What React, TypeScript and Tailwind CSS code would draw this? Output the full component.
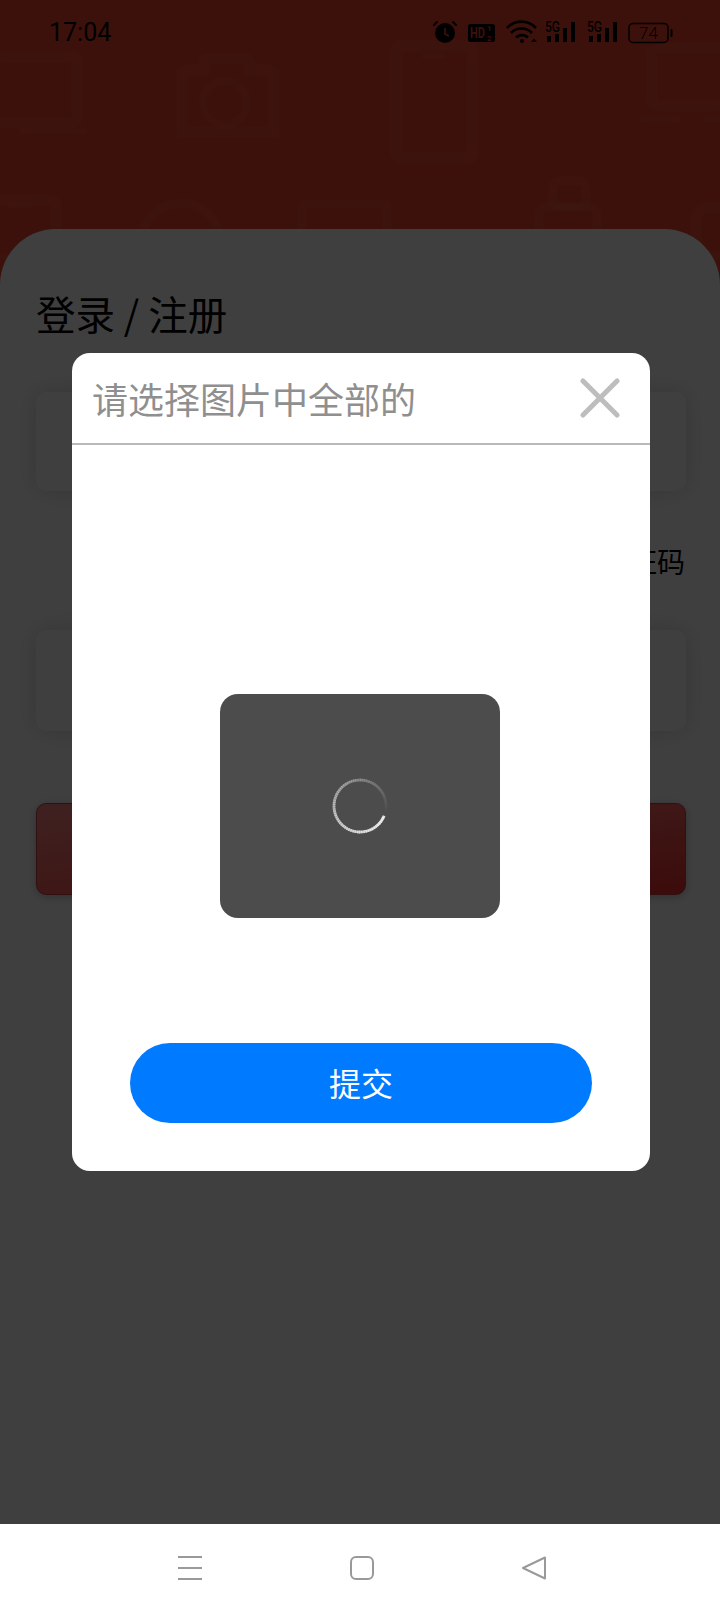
const font = { fontFamily: '"Noto Sans CJK SC", sans-serif' };

// the device doodles behind the red header, very faint
function HeaderPattern() {
  return (
    <svg className="absolute left-0 top-0 blur-[1px]" width="720" height="260" fill="none" stroke="#ffffff" strokeOpacity="0.05" strokeWidth="10">
      <rect x="-60" y="57" width="137" height="66" rx="4" />
      <path d="M20 131h66" strokeWidth="5" />
      <path d="M182 132V74a4 4 0 0 1 4-4h18v-8a3 3 0 0 1 3-3h40a3 3 0 0 1 3 3v8h20a4 4 0 0 1 4 4v58z" />
      <circle cx="225" cy="103" r="22" strokeWidth="7" />
      <rect x="396" y="46" width="77" height="112" rx="6" strokeWidth="11" />
      <path d="M422 56h24" strokeWidth="4" />
      <rect x="652" y="48" width="100" height="58" rx="4" />
      <path d="M640 119h40M704 119h20" strokeWidth="7" />
      <rect x="-30" y="200" width="86" height="60" rx="6" />
      <path d="M8 206h24" strokeWidth="4" />
      <circle cx="181" cy="242" r="39" strokeWidth="8" />
      <rect x="302" y="204" width="85" height="60" rx="4" strokeWidth="8" />
      <rect x="553" y="181" width="33" height="26" rx="6" strokeWidth="8" />
      <rect x="539" y="207" width="58" height="50" rx="8" strokeWidth="8" />
      <rect x="696" y="208" width="60" height="50" rx="12" />
    </svg>
  );
}

function StatusIcons() {
  return (
    <svg className="absolute left-0 top-0" width="720" height="60">
      {/* alarm */}
      <circle cx="445" cy="33" r="10" fill="#000" />
      <path d="M437 22l-3 3M453 22l3 3" stroke="#000" strokeWidth="2" strokeLinecap="round" />
      <path d="M445 28v6l4 2" stroke="#3c110b" strokeWidth="1.6" fill="none" />
      {/* HD */}
      <rect x="468" y="24" width="27" height="18" rx="2.5" fill="#000" />
      <text x="470" y="38" fontSize="14" fontWeight="700" fill="#3c110b" fontFamily="Roboto, sans-serif" textLength="15" lengthAdjust="spacingAndGlyphs">HD</text>
      <text x="487" y="31" fontSize="8" fontWeight="700" fill="#3c110b" fontFamily="Roboto, sans-serif">1</text>
      <text x="487" y="41" fontSize="8" fontWeight="700" fill="#3c110b" fontFamily="Roboto, sans-serif">2</text>
      {/* wifi */}
      <g fill="none" stroke="#000" strokeWidth="2.6">
        <path d="M507 28c8-8.500 21-8.500 29 0" />
        <path d="M511 33c5.500-6 15.500-6 21 0" />
        <path d="M516 37.500c3-3.200 9-3.200 12 0" />
      </g>
      <circle cx="522" cy="41" r="2" fill="#000" />
      <path d="M531 42l3-3.500 3 3.500z" fill="#000" />
      {/* two 5G signal groups */}
      {[0, 42].map((dx) => (
        <g key={dx} fill="#000">
          <text x={545 + dx} y="32" fontSize="14" fontWeight="500" fontFamily="Roboto, sans-serif" textLength="15" lengthAdjust="spacingAndGlyphs">5G</text>
          <rect x={547 + dx} y="36" width="4" height="6" />
          <rect x={555 + dx} y="34" width="4" height="8" />
          <rect x={563 + dx} y="28" width="4" height="14" />
          <rect x={571 + dx} y="22" width="4" height="20" />
        </g>
      ))}
      {/* battery */}
      <rect x="629" y="23.500" width="39" height="19" rx="4" fill="none" stroke="#000" strokeWidth="1.5" />
      <rect x="670.500" y="29" width="2" height="8" rx="1" fill="#000" />
      <text x="648.500" y="39" fontSize="17" textAnchor="middle" fill="#000" fontFamily="Roboto, sans-serif" fontWeight="300">74</text>
    </svg>
  );
}

// conic fade, bright at the leading end and dying off clockwise
function Spinner() {
  const cx = 30;
  const cy = 30;
  const r = 26;
  const count = 72;
  const pts = Array.from({ length: count }, (_, i) => {
    const t = i / count;
    const a0 = ((112 + t * 350 - 90) * Math.PI) / 180;
    const a1 = ((112 + ((i + 1.3) / count) * 350 - 90) * Math.PI) / 180;
    return {
      d: `M${cx + r * Math.cos(a0)} ${cy + r * Math.sin(a0)}A${r} ${r} 0 0 1 ${cx + r * Math.cos(a1)} ${cy + r * Math.sin(a1)}`,
      o: 0.85 * (1 - t),
    };
  });
  return (
    <svg width="60" height="60" fill="none">
      {pts.map((p, i) => (
        <path key={i} d={p.d} stroke="#fff" strokeOpacity={p.o} strokeWidth="2.800" />
      ))}
    </svg>
  );
}

export default function App() {
  return (
    <div className="relative flex h-[1612px] w-[720px] flex-col overflow-hidden bg-white" style={font}>
      {/* login page underneath */}
      <div className="relative flex h-[1524px] flex-col bg-[#f4462e]">
        <HeaderPattern />
        <div className="relative mt-[229px] flex flex-1 flex-col rounded-t-[56px] bg-white px-[36px] pt-[59px]">
          <h1 className="h-[50px] text-[39.500px] font-normal leading-[50px] text-black">登录 / 注册</h1>
          <div className="mt-[54px] h-[99px] w-[650px] rounded-[10px] bg-white shadow-[0_0_24px_rgba(0,0,0,0.16)]" />
          <div className="mt-[39px] flex h-[62px] w-[649px] items-center justify-end text-[28px] text-black">获取验证码</div>
          <div className="mt-[38px] h-[101px] w-[650px] rounded-[10px] bg-white shadow-[0_0_24px_rgba(0,0,0,0.16)]" />
          <div className="mt-[72px] h-[92px] w-[650px] rounded-[10px] border border-[#c04040] bg-gradient-to-br from-[#ff8484] to-[#f02a2a] shadow-[0_2px_10px_rgba(0,0,0,0.25)]" />
        </div>
      </div>

      {/* dim layer + captcha dialog */}
      <div className="absolute inset-x-0 top-0 h-[1524px] bg-black/[.753]">
        <StatusIcons />
        <div className="absolute left-[49px] top-[17px] text-[25px] leading-[32px] text-black" style={{ fontFamily: "Roboto, sans-serif" }}>17:04</div>
        <div className="ml-[72px] mt-[353px] flex h-[818px] w-[578px] flex-col rounded-[18px] bg-white">
          <div className="flex h-[92px] items-center justify-between border-b-2 border-[#b9b9b9] pl-[20px] pr-[30px]">
            <span className="text-[36px] font-normal leading-[50px] text-[#8f8f8f]">请选择图片中全部的</span>
            <svg width="40" height="40" viewBox="0 0 40 40" fill="none" stroke="#bdbdbd" strokeWidth="5" strokeLinecap="round">
              <path d="M3 3l34 34M37 3L3 37" />
            </svg>
          </div>
          <div className="ml-[148px] mt-[249px] flex h-[224px] w-[280px] items-center justify-center rounded-[18px] bg-[#4c4c4c]">
            <Spinner />
          </div>
          <button className="ml-[58px] mt-[125px] h-[80px] w-[462px] rounded-full bg-[#007aff] pb-[2px] text-[32px] text-white">提交</button>
        </div>
      </div>

      {/* system nav */}
      <div className="flex flex-1 items-start justify-between bg-white pl-[178px] pr-[174px] pt-[32px]">
        <svg width="24" height="24" fill="none" stroke="#999" strokeWidth="2">
          <path d="M0 1h24M0 12h24M0 23h24" />
        </svg>
        <svg width="24" height="24" fill="none" stroke="#999" strokeWidth="2">
          <rect x="1" y="1" width="22" height="22" rx="5" />
        </svg>
        <svg width="24" height="24" fill="none" stroke="#999" strokeWidth="2" strokeLinejoin="round">
          <path d="M23 1.500v21L1 12z" />
        </svg>
      </div>
    </div>
  );
}
